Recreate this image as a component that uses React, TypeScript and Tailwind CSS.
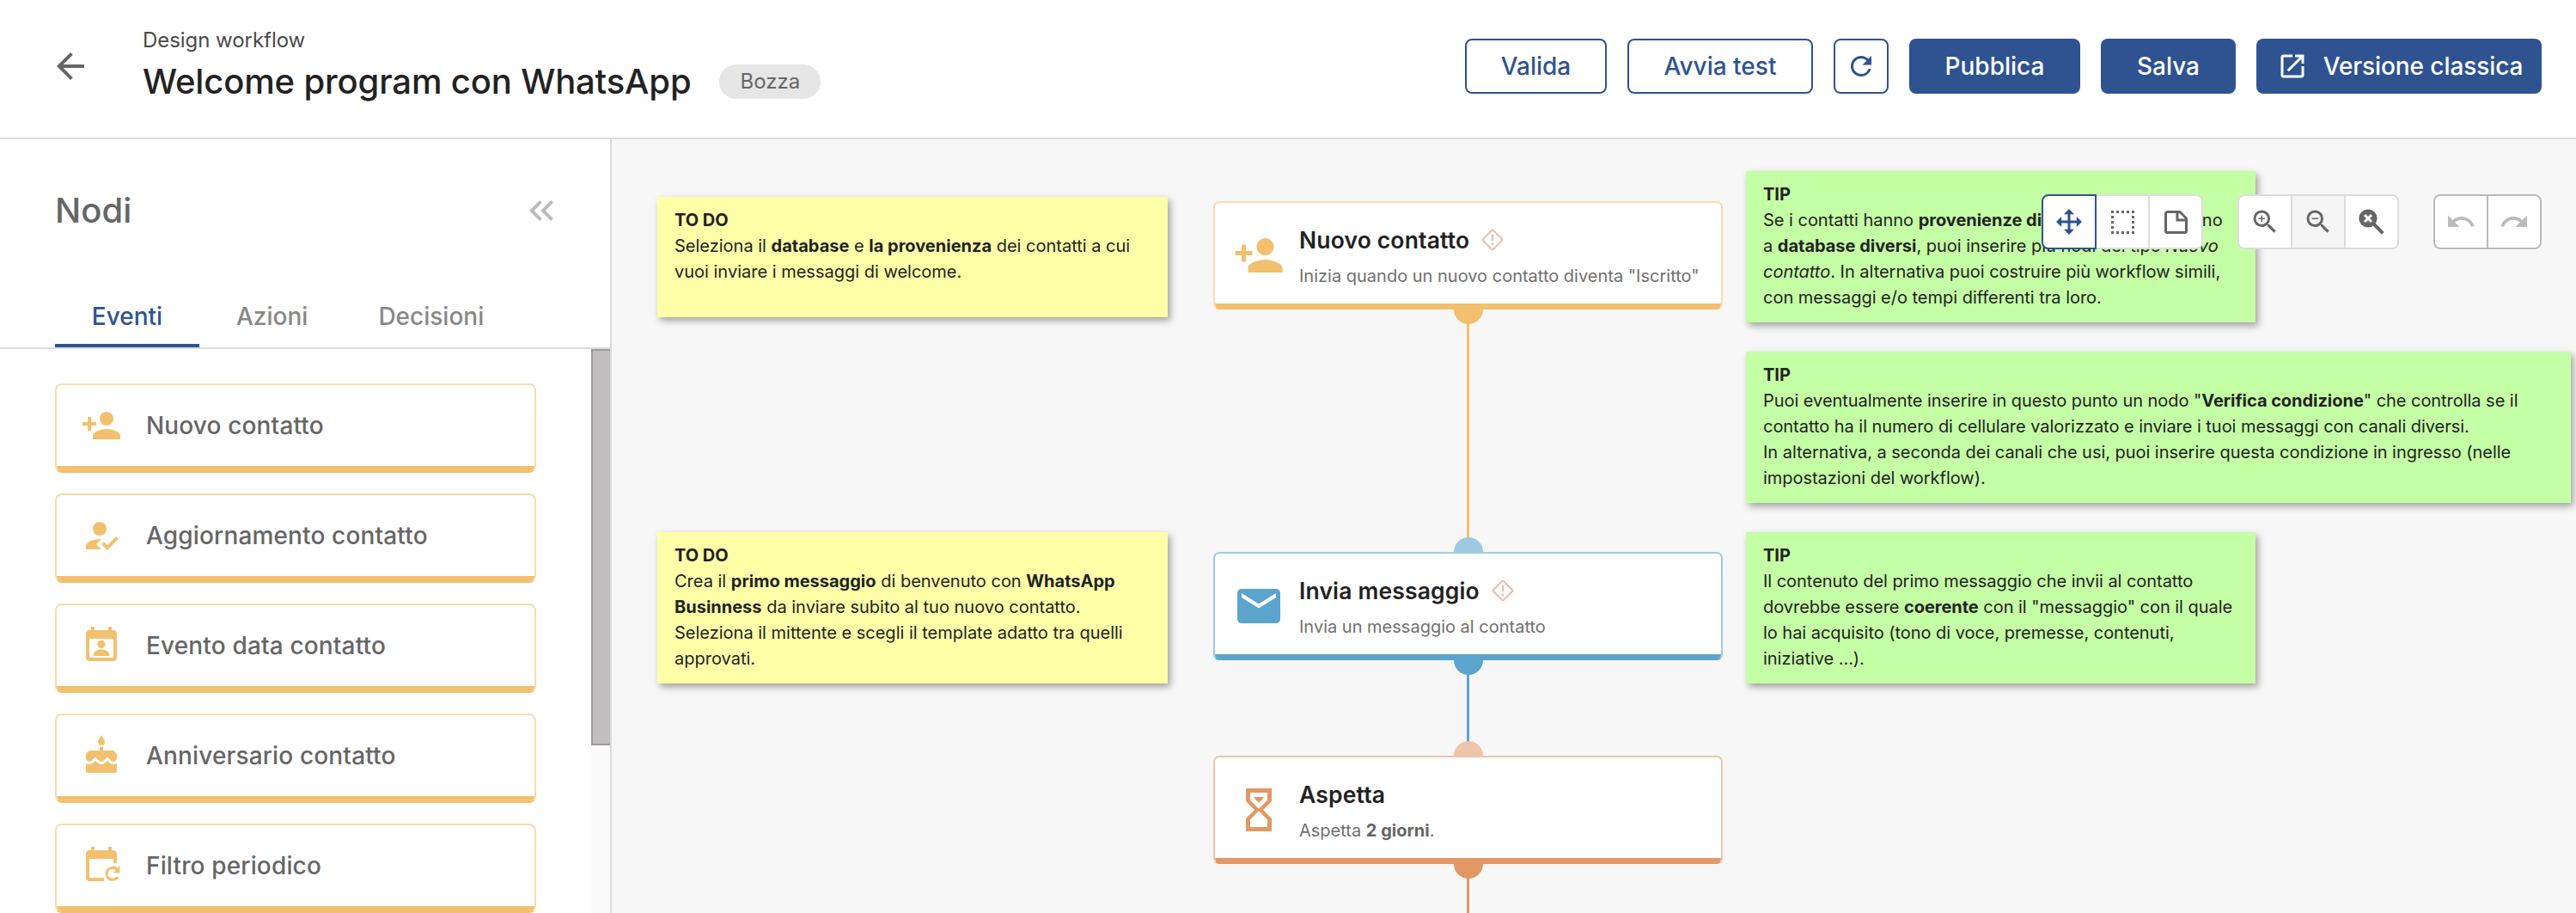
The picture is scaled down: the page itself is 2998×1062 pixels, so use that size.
import type { IconType } from 'react-icons'
import type { ReactNode } from 'react'
import {
  MdArrowBack,
  MdCake,
  MdEmail,
  MdHowToReg,
  MdKeyboardDoubleArrowLeft,
  MdOpenInNew,
  MdPersonAdd,
  MdRedo,
  MdRefresh,
  MdUndo,
  MdZoomIn,
  MdZoomOut,
} from 'react-icons/md'

type IconProps = { className?: string }

function ContactCalendarIcon({ className }: IconProps) {
  return (
    <svg viewBox="0 0 24 24" fill="currentColor" className={className}>
      <path d="M19 3h-1V1h-2v2H8V1H6v2H5a2 2 0 0 0-2 2v14c0 1.100.9 2 2 2h14c1.100 0 2-.9 2-2V5c0-1.100-.9-2-2-2zm0 16H5V8h14v11z" />
      <circle cx="12" cy="11.200" r="2.300" />
      <path d="M7.400 18v-.9c0-1.800 3-2.800 4.600-2.800s4.600 1 4.600 2.800v.9z" />
    </svg>
  )
}

function PeriodicIcon({ className }: IconProps) {
  return (
    <svg viewBox="0 0 24 24" fill="currentColor" className={className}>
      <path d="M5 19V8h14v2.600h2V5c0-1.100-.9-2-2-2h-1V1h-2v2H8V1H6v2H5c-1.110 0-2 .9-2 2v14c0 1.100.89 2 2 2h8.500v-2zm13.500-6.500c-2.300 0-4.200 1.900-4.200 4.200s1.900 4.200 4.200 4.200c1.700 0 3.200-1 3.850-2.500h-1.800c-.5.600-1.200 1-2.050 1a2.700 2.700 0 1 1 1.900-4.600l-1.400 1.400H22.700v-4.200l-1.200 1.200c-.8-.750-1.850-1.200-3-1.200z" />
    </svg>
  )
}

function HourglassIcon({ className }: IconProps) {
  return (
    <svg viewBox="0 0 24 24" fill="currentColor" className={className}>
      <path d="M6 2v6l4 4-4 4v6h12v-6l-4-4 4-4V2H6zm10 14.500V20H8v-3.500l4-4 4 4zm-4-5-4-4V4h8v3.500l-4 4z" />
      <path d="M9.900 6h4.200v.7L12 8.700l-2.100-2z" />
    </svg>
  )
}

function WarningIcon({ className }: IconProps) {
  return (
    <svg viewBox="0 0 26 26" fill="none" stroke="currentColor" strokeWidth="2" className={className}>
      <path d="M12 2.100a1.400 1.400 0 0 1 2 0l9.900 9.900a1.400 1.400 0 0 1 0 2L14 23.900a1.400 1.400 0 0 1-2 0L2.100 14a1.400 1.400 0 0 1 0-2z" />
      <path d="M13 6.700v7.300M13 16.500v2.500" strokeWidth="2.400" />
    </svg>
  )
}

function MoveIcon({ className }: IconProps) {
  return (
    <svg viewBox="0 0 30 30" fill="currentColor" className={className}>
      <path d="M15 0l6 6.200h-4.500v7.300h7.300V9L30 15l-6.200 6v-4.500h-7.300v7.300H21L15 30l-6-6.200h4.500v-7.300H6.200V21L0 15l6.200-6v4.500h7.300V6.200H9z" />
    </svg>
  )
}

function SelectAreaIcon({ className }: IconProps) {
  return (
    <svg viewBox="0 0 27 27" fill="none" stroke="currentColor" strokeWidth="3" strokeDasharray="3 3" className={className}>
      <path d="M0 1.500h27M0 25.500h27M1.500 0v27M25.500 0v27" />
    </svg>
  )
}

function NoteIcon({ className }: IconProps) {
  return (
    <svg viewBox="0 0 27 27" fill="none" stroke="currentColor" strokeWidth="3" className={className}>
      <path d="M18 1.500H3.500a2 2 0 0 0-2 2v20a2 2 0 0 0 2 2h20a2 2 0 0 0 2-2V9z" />
      <path d="M15 1.500V11h10.500" />
    </svg>
  )
}

function ZoomResetIcon({ className }: IconProps) {
  return (
    <svg viewBox="0 0 30 30" className={className}>
      <path d="M16 16l12.300 12.300" stroke="currentColor" strokeWidth="4" />
      <circle cx="11" cy="11" r="10.600" fill="currentColor" />
      <path d="M7 7l8 8M15 7l-8 8" stroke="white" strokeWidth="3" />
    </svg>
  )
}

const paletteItems: { label: string; icon: IconType | ((p: IconProps) => ReactNode) }[] = [
  { label: 'Nuovo contatto', icon: MdPersonAdd },
  { label: 'Aggiornamento contatto', icon: MdHowToReg },
  { label: 'Evento data contatto', icon: ContactCalendarIcon },
  { label: 'Anniversario contatto', icon: MdCake },
  { label: 'Filtro periodico', icon: PeriodicIcon },
]

function Note({ title, className, children }: { title: string; className: string; children: ReactNode }) {
  return (
    <div className={`absolute px-5 pt-3 text-[20px] leading-[30px] text-[#222] shadow-[3px_4px_8px_rgba(0,0,0,0.35)] ${className}`}>
      <p className="font-bold">{title}</p>
      {children}
    </div>
  )
}

type NodeProps = {
  title: string
  description: ReactNode
  icon: ReactNode
  warning?: boolean
  input?: string
  border: string
  accent: string
  className: string
}

function WorkflowNode({ title, description, icon, warning, input, border, accent, className }: NodeProps) {
  return (
    <div className={`absolute left-[700px] w-[593px] ${className}`}>
      {input && <div className={`absolute -top-[17px] left-[280px] h-[17px] w-[34px] rounded-t-full ${input}`} />}
      <div className={`relative flex h-[126px] items-center overflow-hidden rounded-[7px] border-2 bg-white pl-[21px] ${border}`}>
        {icon}
        <div className="ml-[17px] pt-[2px]">
          <div className="flex items-center gap-[14px] text-[26.5px] leading-[40px] font-semibold tracking-[0.15px] text-[#222]">
            {title}
            {warning && <WarningIcon className="size-[26px] text-[#e6bda4]" />}
          </div>
          <p className="mt-[6px] text-[20px] leading-[32px] text-[#707070]">{description}</p>
        </div>
        <div className={`absolute inset-x-0 bottom-0 h-[5px] ${accent}`} />
      </div>
      <div className={`absolute top-[126px] left-[280px] h-[17px] w-[34px] rounded-b-full ${accent}`} />
    </div>
  )
}

const outlined = 'flex h-16 items-center justify-center rounded-lg border-2 border-[#2f5391] bg-white text-[#2f5391]'
const filled = 'flex h-16 items-center justify-center rounded-lg bg-[#2f5391] text-white'
const tool = 'flex size-16 items-center justify-center border-2 bg-white'

export default function App() {
  return (
    <div className="flex h-[1062px] w-[2998px] flex-col overflow-hidden bg-white font-['Inter',sans-serif]">
      <header className="flex h-[162px] shrink-0 items-start border-b-2 border-[#dcdcdc] pr-10 pl-[58px]">
        <MdArrowBack className="mt-[53px] size-12 text-[#666]" />
        <div className="mt-[31px] ml-[60px]">
          <p className="text-[24px] leading-[32px] tracking-[-0.05px] text-[#4a4a4a]">Design workflow</p>
          <div className="mt-[7px] flex items-center">
            <h1 className="text-[40px] leading-[50px] font-medium tracking-[-0.15px] text-[#222]">Welcome program con WhatsApp</h1>
            <span className="ml-[33px] flex h-10 items-center rounded-full bg-[#e6e6e6] px-6 text-[24px] text-[#666]">Bozza</span>
          </div>
        </div>
        <div className="mt-[45px] ml-auto flex gap-6 text-[28px] font-medium">
          <button className={`${outlined} w-[165px]`}>Valida</button>
          <button className={`${outlined} w-[216px]`}>Avvia test</button>
          <button className={`${outlined} w-16`}>
            <MdRefresh className="size-9" />
          </button>
          <button className={`${filled} w-[199px]`}>Pubblica</button>
          <button className={`${filled} w-[157px]`}>Salva</button>
          <button className={`${filled} w-[332px] gap-[18px] pl-[2px] tracking-[-0.08px]`}>
            <MdOpenInNew className="size-9" />
            Versione classica
          </button>
        </div>
      </header>

      <div className="flex min-h-0 flex-1">
        <aside className="flex w-[712px] shrink-0 flex-col border-r-2 border-[#dcdcdc]">
          <div className="flex h-[166px] items-center justify-between pr-14 pl-16">
            <h2 className="text-[40px] font-medium text-[#666]">Nodi</h2>
            <MdKeyboardDoubleArrowLeft className="size-12 text-[#bbb]" />
          </div>
          <nav className="flex h-[78px] shrink-0 items-stretch border-b-2 border-[#dcdcdc] pl-16 text-[28px] font-medium text-[#888]">
            <span className="flex w-[168px] items-center justify-center border-b-4 border-[#2f5391] pt-2 text-[#2f5391]">Eventi</span>
            <span className="flex items-center pt-1 pl-[43px]">Azioni</span>
            <span className="flex items-center pt-1 pl-[82px]">Decisioni</span>
          </nav>
          <div className="flex min-h-0 flex-1 overflow-hidden">
            <div className="flex flex-1 flex-col gap-6 pt-10 pr-16 pl-16">
              {paletteItems.map((item) => (
                <div key={item.label} className="relative flex h-[104px] shrink-0 items-center overflow-hidden rounded-lg border-2 border-[#f9dcab] border-b-[#f2c06e] pb-[6px] pl-7">
                  <item.icon className="size-12 text-[#f2c06e]" />
                  <span className="ml-7 text-[28px] font-medium tracking-[0.15px] text-[#666]">{item.label}</span>
                  <div className="absolute inset-x-0 bottom-0 h-[6px] bg-[#f2c06e]" />
                </div>
              ))}
            </div>
            <div className="w-[22px] bg-[#fafafa]">
              <div className="h-[461px] border-2 border-r-0 border-[#a09c9c] bg-[#c1bebf]" />
            </div>
          </div>
        </aside>

        <main className="relative flex-1 overflow-hidden bg-[#f7f7f7]">
          {/* Edges */}
          <div className="absolute top-[213px] left-[995px] h-[252px] w-[3px] bg-[#f2c06e]" />
          <div className="absolute top-[621px] left-[995px] h-[82px] w-[3px] bg-[#5ba4cc]" />
          <div className="absolute top-[858px] left-[995px] h-[80px] w-[3px] bg-[#e19865]" />

          {/* Sticky notes */}
          <Note title="TO DO" className="top-[67px] left-[53px] h-[140px] w-[594px] bg-[#ffffa8]">
            Seleziona il <b>database</b> e <b>la provenienza</b> dei contatti a cui
            <br />
            vuoi inviare i messaggi di welcome.
          </Note>
          <Note title="TO DO" className="top-[457px] left-[53px] h-[176px] w-[594px] bg-[#ffffa8]">
            Crea il <b>primo messaggio</b> di benvenuto con <b>WhatsApp</b>
            <br />
            <b>Businness</b> da inviare subito al tuo nuovo contatto.
            <br />
            Seleziona il mittente e scegli il template adatto tra quelli
            <br />
            approvati.
          </Note>
          <Note title="TIP" className="top-[37px] left-[1320px] h-[176px] w-[593px] bg-[#c5ffa5] tracking-[-0.02px]">
            Se i contatti hanno <b>provenienze diverse</b> o appartengono
            <br />a <b>database diversi</b>, puoi inserire più nodi del tipo <i>Nuovo</i>
            <br />
            <i>contatto</i>. In alternativa puoi costruire più workflow simili,
            <br />
            con messaggi e/o tempi differenti tra loro.
          </Note>
          <Note title="TIP" className="top-[247px] left-[1320px] h-[176px] w-[960px] bg-[#c5ffa5] tracking-[-0.04px]">
            Puoi eventualmente inserire in questo punto un nodo "<b>Verifica condizione</b>" che controlla se il
            <br />
            contatto ha il numero di cellulare valorizzato e inviare i tuoi messaggi con canali diversi.
            <br />
            In alternativa, a seconda dei canali che usi, puoi inserire questa condizione in ingresso (nelle
            <br />
            impostazioni del workflow).
          </Note>
          <Note title="TIP" className="top-[457px] left-[1320px] h-[176px] w-[593px] bg-[#c5ffa5] tracking-[-0.04px]">
            Il contenuto del primo messaggio che invii al contatto
            <br />
            dovrebbe essere <b>coerente</b> con il "messaggio" con il quale
            <br />
            lo hai acquisito (tono di voce, premesse, contenuti,
            <br />
            iniziative ...).
          </Note>

          {/* Nodes */}
          <WorkflowNode
            title="Nuovo contatto"
            description={'Inizia quando un nuovo contatto diventa "Iscritto"'}
            icon={<MdPersonAdd className="size-[60px] shrink-0 text-[#f2c06e]" />}
            warning
            border="border-[#f9dcab] border-b-[#f2c06e]"
            accent="bg-[#f2c06e]"
            className="top-[72px]"
          />
          <WorkflowNode
            title="Invia messaggio"
            description="Invia un messaggio al contatto"
            icon={<MdEmail className="size-[60px] shrink-0 text-[#5ba4cc]" />}
            warning
            input="bg-[#9dcae1]"
            border="border-[#9dcae1] border-b-[#5ba4cc]"
            accent="bg-[#5ba4cc]"
            className="top-[480px]"
          />
          <WorkflowNode
            title="Aspetta"
            description={<>Aspetta <b className="text-[#666]">2 giorni</b>.</>}
            icon={<HourglassIcon className="size-[60px] shrink-0 text-[#e19865]" />}
            input="bg-[#edc5aa]"
            border="border-[#edc5aa] border-b-[#e19865]"
            accent="bg-[#e19865]"
            className="top-[717px]"
          />

          {/* Canvas toolbar */}
          <div className="absolute top-16 right-10 flex gap-10 text-[#666]">
            <div className="flex -space-x-[2px]">
              <button className={`${tool} relative z-10 rounded-l-lg border-[#2f5391] text-[#2f5391]`}>
                <MoveIcon className="size-[30px]" />
              </button>
              <button className={`${tool} border-[#dcdcdc]`}>
                <SelectAreaIcon className="size-[27px]" />
              </button>
              <button className={`${tool} rounded-r-lg border-[#dcdcdc]`}>
                <NoteIcon className="size-[27px]" />
              </button>
            </div>
            <div className="flex -space-x-[2px]">
              <button className={`${tool} rounded-l-lg border-[#dcdcdc]`}>
                <MdZoomIn className="size-9" />
              </button>
              <button className="flex size-16 items-center justify-center border-2 border-[#dcdcdc] bg-[#f5f5f5]">
                <MdZoomOut className="size-9" />
              </button>
              <button className={`${tool} rounded-r-lg border-[#dcdcdc]`}>
                <ZoomResetIcon className="size-[30px]" />
              </button>
            </div>
            <div className="flex -space-x-[2px] text-[#bbb]">
              <button className={`${tool} rounded-l-lg border-[#bbb]`}>
                <MdUndo className="size-9" />
              </button>
              <button className={`${tool} rounded-r-lg border-[#bbb]`}>
                <MdRedo className="size-9" />
              </button>
            </div>
          </div>
        </main>
      </div>
    </div>
  )
}
